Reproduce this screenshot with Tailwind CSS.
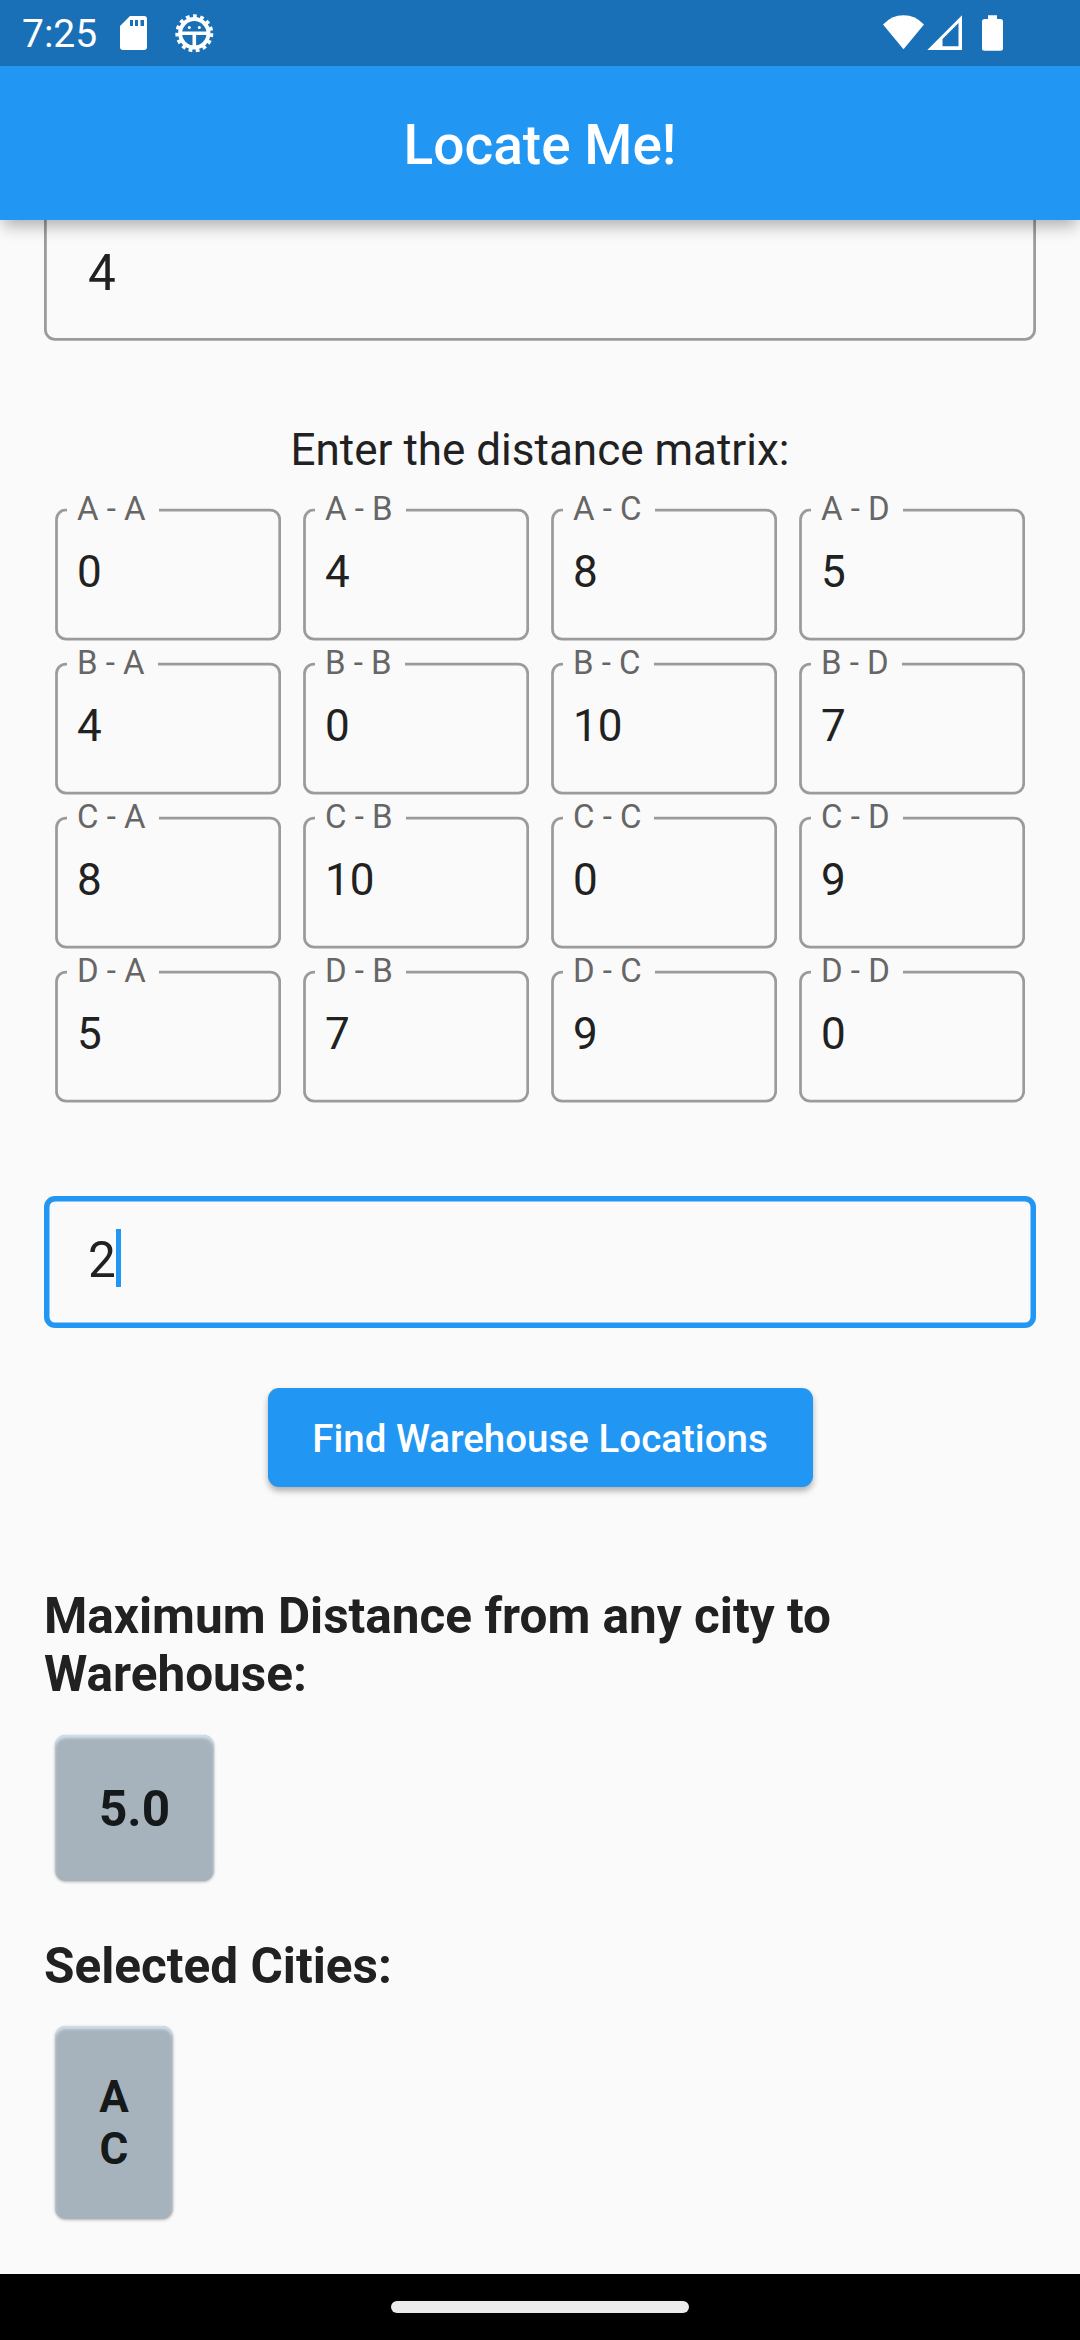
<!DOCTYPE html>
<html lang="en">
<head>
<meta charset="utf-8">
<title>Locate Me!</title>
<script src="https://cdn.jsdelivr.net/npm/@tailwindcss/browser@4"></script>
</head>
<body class="bg-[#fafafa] font-['Roboto',sans-serif] text-[#212121]">
<div class="flex h-[2340px] w-[1080px] flex-col overflow-hidden">
  <header class="relative z-10 shrink-0 bg-[#2196f3] text-white shadow-[0_9px_15px_-3px_rgba(0,0,0,0.3)]">
    <div class="flex h-[66px] bg-[#1a70b7] pl-[22px]">
      <span class="w-[98px] text-[39px] leading-[69px]">7:25</span>
      <svg class="h-[66px] w-[100px]" viewBox="120 0 100 66" fill="#fff">
        <path fill-rule="evenodd" d="M130 16h14q3 0 3 3v28q0 3-3 3h-21q-3 0-3-3V26zM130 20v6h3v-6zM135 20v6h3v-6zM140.500 20v6h3.500v-6z"/>
        <circle cx="194.300" cy="33.300" r="14.200" fill="none" stroke="#fff" stroke-width="4"/>
        <circle cx="194.300" cy="33.300" r="17" fill="none" stroke="#fff" stroke-width="4" stroke-dasharray="3.700 3.421"/>
        <path d="M181 31.500h26.600v3.400h-11.500V47h-3.600V34.900H181z"/>
        <circle cx="189.300" cy="27.400" r="1.500"/><circle cx="199.300" cy="27.400" r="1.500"/>
      </svg>
      <svg class="ml-auto h-[66px] w-[240px]" viewBox="840 0 240 66" fill="#fff">
        <path d="M903.500 49.300L883 24.500q8.500-9.300 20.500-9.300T924 24.500z"/>
        <path fill-rule="evenodd" d="M927.300 50L962 15.300V50zM942.500 39v7.300h16V23z"/>
        <path d="M988 15.200h9V19h3.500q2.500 0 2.500 2.500v26.700q0 2.500-2.500 2.500h-16q-2.500 0-2.500-2.500V21.500q0-2.500 2.500-2.500h3.500z"/>
      </svg>
    </div>
    <h1 class="h-[154px] text-center text-[55px] leading-[159px] font-medium">Locate Me!</h1>
  </header>

  <main class="flex flex-col px-[44px]">
    <div class="relative h-[121px] pl-[44px] text-[49.5px] leading-[106px]">4
      <svg class="absolute inset-0 h-[121px] w-[992px]" fill="none" stroke="#9b9b9b" stroke-width="2.750"><rect x="1.400" y="-20" width="989.200" height="139.300" rx="9.600"/></svg>
    </div>

    <p class="mt-[83px] text-center text-[44px] leading-[52px]">Enter the distance matrix:</p>
    <div id="matrix" class="mt-[32px] grid grid-cols-4"></div>

    <div class="relative mt-[72px] flex h-[132px] items-start pl-[44px] text-[49.5px] leading-[128px]">2
      <span class="mt-[33px] h-[58px] w-[5.5px] bg-[#2196f3]"></span>
      <svg class="absolute inset-0 h-[132px] w-[992px]" fill="none" stroke="#2196f3" stroke-width="5.500"><rect x="2.750" y="2.750" width="986.500" height="126.500" rx="8.250"/></svg>
    </div>

    <button class="mt-[60px] h-[99px] w-[545px] self-center rounded-[11px] bg-[#2196f3] text-center text-[38.5px] leading-[101px] font-medium text-white shadow-[0_4px_6px_0_rgba(0,0,0,0.3)]">Find Warehouse Locations</button>

    <h2 class="mt-[100px] text-[49.5px] leading-[58px] font-bold">Maximum Distance from any city to Warehouse:</h2>
    <div class="mt-[32px] ml-[11px] h-[146px] w-[159px] rounded-[11px] bg-[#a7b3bc] text-center text-[49.5px] leading-[148px] font-bold text-[#16191a] shadow-[inset_0_3px_3px_0_#d0e0ea,0_1px_3px_rgba(0,0,0,0.3)]">5.0</div>

    <h2 class="mt-[56px] text-[49.5px] leading-[58px] font-bold">Selected Cities:</h2>
    <div class="mt-[31px] ml-[11px] h-[193px] w-[118px] rounded-[11px] bg-[#a7b3bc] pt-[45px] text-center text-[44px] leading-[52px] font-bold text-[#16191a] shadow-[inset_0_3px_3px_0_#d0e0ea,0_1px_3px_rgba(0,0,0,0.3)]">A<br>C</div>
  </main>

  <footer class="mt-auto flex h-[66px] shrink-0 justify-center bg-black pt-[27px]">
    <div class="h-[12px] w-[298px] rounded-full bg-[#ebebeb]"></div>
  </footer>
</div>
<script>
  const cities = ['A', 'B', 'C', 'D'];
  const distances = [[0, 4, 8, 5], [4, 0, 10, 7], [8, 10, 0, 9], [5, 7, 9, 0]];
  document.getElementById('matrix').innerHTML = distances.map((row, i) => row.map((d, j) => `
    <div class="h-[154px] px-[11px]">
      <div class="relative h-[132px] pl-[22px] text-[44px] leading-[128px]">
        <svg class="absolute inset-0 h-[133px] w-[226px]" fill="none" stroke="#9b9b9b" stroke-width="2.750"><rect x="1.500" y="2" width="223.200" height="129" rx="9.600"/></svg>
        <span class="absolute top-[-19px] left-[12px] bg-[#fafafa] pr-[13px] pl-[10px] text-[33px] leading-[40px] whitespace-nowrap text-[#666]">${cities[i]} - ${cities[j]}</span>
        ${d}
      </div>
    </div>`).join('')).join('');
</script>
</body>
</html>
